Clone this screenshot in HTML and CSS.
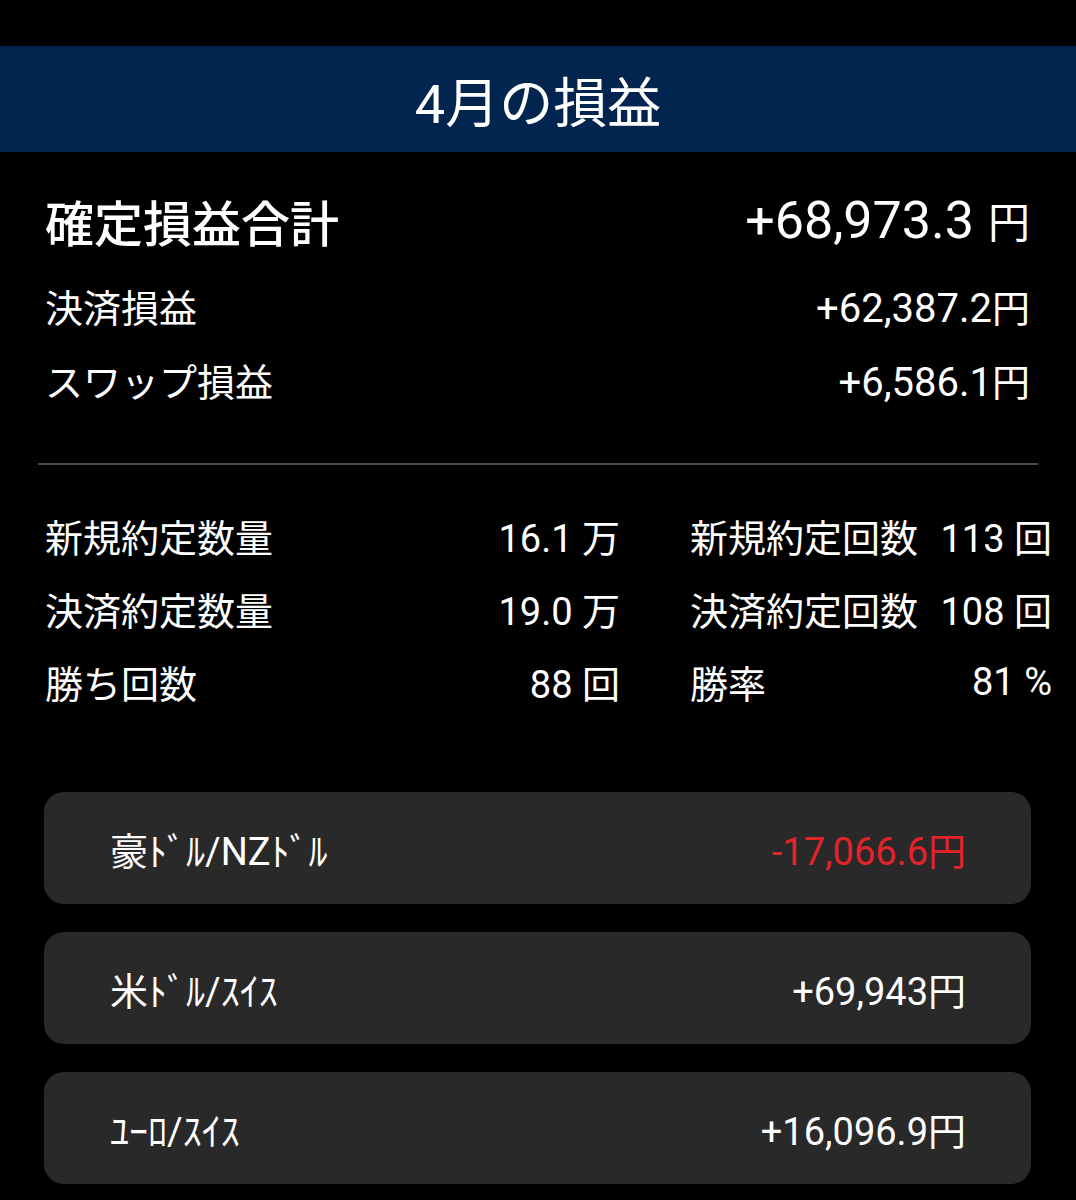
FILE: index.html
```html
<!DOCTYPE html>
<html lang="ja">
<head>
    <meta charset="UTF-8">
    <meta name="viewport" content="width=device-width, initial-scale=1.0">
    <title>4月の損益</title>
    <link rel="stylesheet" href="styles.css">
</head>
<body>
<div class="header">4月の損益</div>

<div class="summary">
    <div class="row total">
        <span class="label">確定損益合計</span>
        <span class="value">+68,973.3<span class="yen">円</span></span>
    </div>
    <div class="row">
        <span class="label">決済損益</span>
        <span class="value">+62,387.2<span class="unit">円</span></span>
    </div>
    <div class="row">
        <span class="label">スワップ損益</span>
        <span class="value">+6,586.1<span class="unit">円</span></span>
    </div>
</div>

<hr class="divider">

<div class="stats">
    <div class="stat"><span>新規約定数量</span><span>16.1 万</span></div>
    <div class="stat"><span>新規約定回数</span><span>113 回</span></div>
    <div class="stat"><span>決済約定数量</span><span>19.0 万</span></div>
    <div class="stat"><span>決済約定回数</span><span>108 回</span></div>
    <div class="stat"><span>勝ち回数</span><span>88 回</span></div>
    <div class="stat"><span>勝率</span><span>81 %</span></div>
</div>

<ul class="pairs">
    <li class="pair"><span>豪ﾄﾞﾙ/NZﾄﾞﾙ</span><span class="loss">-17,066.6円</span></li>
    <li class="pair"><span>米ﾄﾞﾙ/ｽｲｽ</span><span>+69,943円</span></li>
    <li class="pair"><span>ﾕｰﾛ/ｽｲｽ</span><span>+16,096.9円</span></li>
</ul>
</body>
</html>
```

FILE: styles.css
```css
body {
    margin: 0;
    padding: 0;
    background-color: #000;
    color: #fff;
    font-family: Roboto, "Noto Sans CJK JP", sans-serif;
}

.header {
    margin-top: 46px;
    height: 106px;
    display: flex;
    align-items: center;
    justify-content: center;
    background-color: #02254f;
    font-size: 54px;
}

.summary {
    padding: 26px 46px 0 45px;
}

.row {
    display: flex;
    justify-content: space-between;
    align-items: center;
    height: 74px;
    font-size: 38px;
}

.row .value {
    font-size: 40px;
}

.unit {
    font-size: 38px;
}

.total {
    height: 84px;
    margin-bottom: 6px;
}

.total .label {
    font-size: 49px;
    font-weight: 500;
}

.total .value {
    font-size: 52px;
}

.yen {
    margin-left: 14px;
    font-size: 42px;
}

.divider {
    margin: 47px 38px 0;
    border: none;
    height: 2px;
    background-color: #4a4a4a;
}

.stats {
    display: grid;
    grid-template-columns: 575px 362px;
    column-gap: 70px;
    padding: 34px 0 0 45px;
}

.stat {
    display: flex;
    justify-content: space-between;
    align-items: center;
    height: 73px;
    font-size: 38px;
}

.pairs {
    list-style-type: none;
    margin: 0;
    padding: 74px 45px 0 44px;
}

.pair {
    display: flex;
    justify-content: space-between;
    align-items: center;
    height: 112px;
    margin-bottom: 28px;
    padding: 0 65px 0 66px;
    background-color: #292929;
    border-radius: 20px;
    font-size: 38px;
}

.loss {
    color: #e3232a;
}
```
